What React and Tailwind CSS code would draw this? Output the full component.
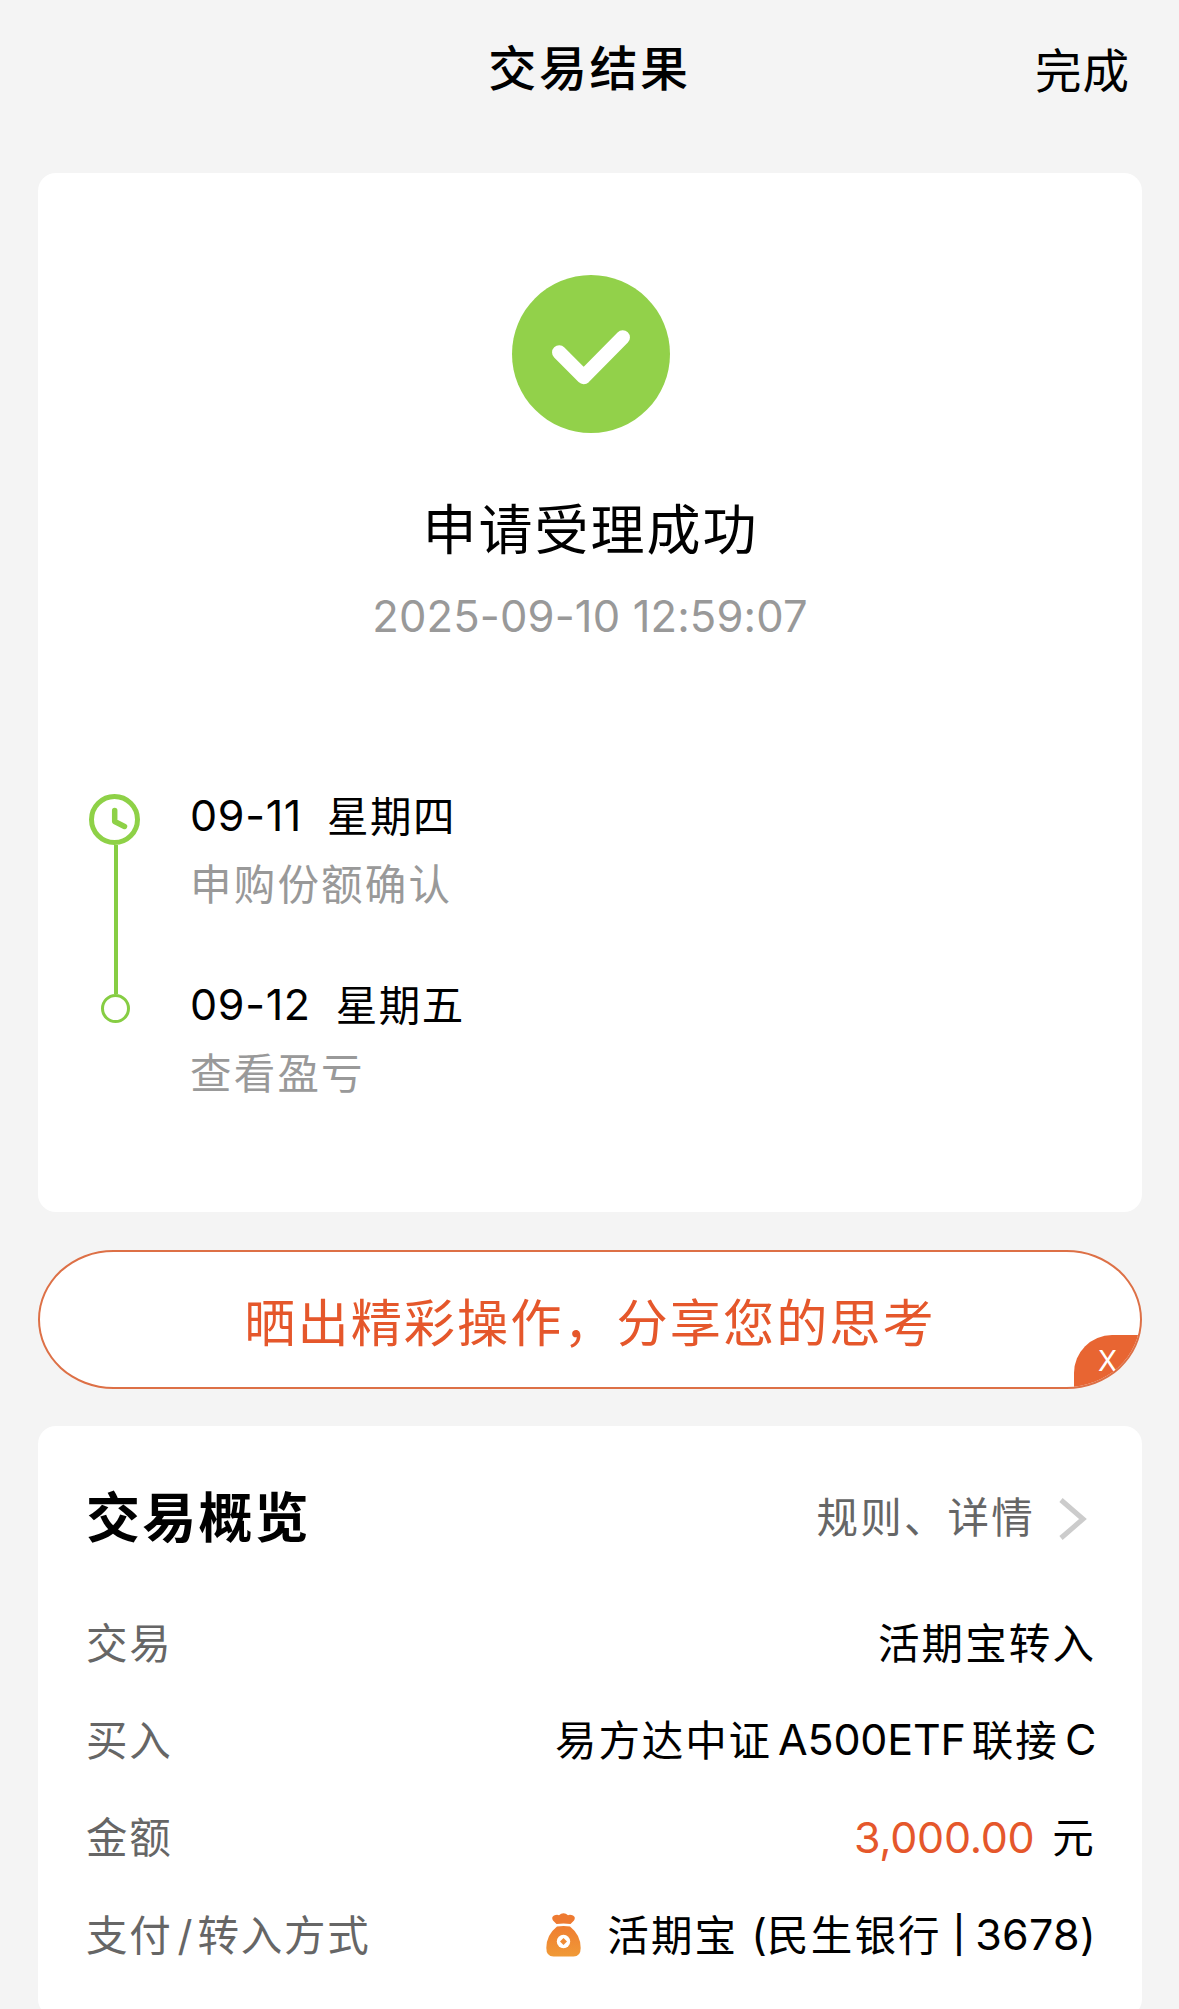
import clsx from 'clsx'

// 处理进度
const STEPS = [
  { date: '09-11', week: '星期四', desc: '申购份额确认' },
  { date: '09-12', week: '星期五', desc: '查看盈亏' },
]

function SuccessIcon() {
  return (
    <svg className="ml-[2px] block size-[158px]" viewBox="0 0 158 158" fill="none">
      <circle cx="79" cy="79" r="79" fill="#92d14a" />
      <path
        d="M47.3 77.5L71.7 102L110.7 62.5"
        stroke="#fff"
        strokeWidth="14.5"
        strokeLinecap="round"
        strokeLinejoin="round"
      />
    </svg>
  )
}

function ClockIcon() {
  return (
    <svg className="block size-[51px] shrink-0" viewBox="0 0 51 51" fill="none" stroke="#8ed147">
      <circle cx="25.5" cy="25.5" r="23" strokeWidth="5" />
      <path d="M25.7 16.5V27.5L35.5 32.5" strokeWidth="5.5" strokeLinecap="round" strokeLinejoin="round" />
    </svg>
  )
}

function MoneyBagIcon() {
  return (
    <svg className="block h-[44px] w-[35px] shrink-0" viewBox="0 0 35 44">
      <defs>
        <linearGradient id="bag" x1="0" y1="0" x2="0" y2="1">
          <stop offset="0" stopColor="#ef7d31" />
          <stop offset="1" stopColor="#f09a37" />
        </linearGradient>
      </defs>
      <path
        d="M10.5 11L7 7.500Q5 4 8 2.500Q11 1 13 2.200Q15 .3 17.500 .3Q20 .3 22 2.200Q24 1 27 2.500Q30 4 28 7.500L24.500 11Q17.500 9.800 10.500 11Z"
        fill="#ee7a31"
      />
      <path
        d="M11 13.500Q17.500 12.500 24 13.500Q34.700 22 34.700 35Q34.700 43.500 27.500 43.500H7.500Q.3 43.500 .3 35Q.3 22 11 13.500Z"
        fill="url(#bag)"
      />
      <circle cx="17.500" cy="28.500" r="6.700" fill="#fff" />
      <path d="M17.500 25L21 28.500L17.500 32L14 28.500Z" fill="#ef8b34" />
    </svg>
  )
}

function Row({ label, className, children }) {
  return (
    <div className="flex h-[97.3px] items-center justify-between pl-[48px] pr-[46px]">
      <span className="pt-[4px] tracking-[1.800px] text-[#666]">{label}</span>
      <span className={clsx('flex items-center text-black', className)}>{children}</span>
    </div>
  )
}

export default function App() {
  return (
    <div className="h-[2009px] w-[1179px] overflow-hidden bg-[#f4f4f4] font-[Inter,'Noto_Sans_CJK_SC',sans-serif] text-[41.5px] leading-none tracking-[2.2px] whitespace-nowrap text-black">
      <header className="grid h-[173px] grid-cols-[1fr_auto_1fr] items-start pt-[38px] pr-[49px]">
        <h1 className="col-start-2 row-start-1 pl-[49px] text-[48px] leading-[62px] font-medium tracking-[2.600px]">交易结果</h1>
        <button className="col-start-3 row-start-1 justify-self-end pt-[2px] text-[46.500px] leading-[62px] tracking-[1px]">完成</button>
      </header>

      <main className="flex flex-col pr-[37px] pl-[38px]">
        <section className="h-[1039px] rounded-[18px] bg-white pt-[102px]">
          <div className="flex flex-col items-center">
            <SuccessIcon />
            <h2 className="mt-[66px] pl-[1px] text-[54px] leading-[64px] tracking-[2px]">申请受理成功</h2>
            <time className="mt-[29px] text-[43.500px] leading-[48px] tracking-[0.150px] text-[#999]">2025-09-10 12:59:07</time>
          </div>

          <div className="mt-[152px] flex pl-[51px]">
            <div className="flex w-[51px] flex-col items-center pt-[2px]">
              <ClockIcon />
              <div className="ml-[2px] h-[149px] w-[4px] bg-[#86cd43]" />
              <div className="ml-[2px] size-[29px] rounded-full border-3 border-[#86cd43]" />
            </div>
            <ul className="ml-[50px]">
              {STEPS.map(step => (
                <li key={step.date} className="h-[189px]">
                  <div className="flex h-[46px] items-center pt-px">
                    <span className="mr-[25px] text-[43px] tracking-[0.700px]">{step.date}</span>
                    <span className="pt-[4px] tracking-[1.500px]">{step.week}</span>
                  </div>
                  <p className="mt-[24px] leading-[46px] text-[#999]">{step.desc}</p>
                </li>
              ))}
            </ul>
          </div>
        </section>

        <section className="relative mt-[38px] flex h-[139px] items-center justify-center overflow-hidden rounded-[76px/70px] border-2 border-[#dd7046] bg-white">
          <span className="pt-[8px] text-[51.200px] tracking-[2px] text-[#e5572b]">晒出精彩操作，分享您的思考</span>
          <button className="absolute right-0 bottom-0 flex h-[52px] w-[66px] items-center rounded-tl-[38px] bg-[#e86532] pl-[24px] text-[28px] tracking-[0px] text-white">
            X
          </button>
        </section>

        <section className="mt-[37px] h-[591px] rounded-[18px] bg-white pt-[48px]">
          <div className="mb-[30px] flex h-[90px] items-center justify-between pl-[48px] pr-[55px]">
            <h3 className="text-[54px] font-bold tracking-[2.200px]">交易概览</h3>
            <span className="flex items-center gap-[24px] text-[#666]">
              规则、详情
              <svg className="block h-[44px] w-[28px]" viewBox="0 0 28 44" fill="none">
                <path d="M2 3L24 22L2 41" stroke="#ccc" strokeWidth="5" />
              </svg>
            </span>
          </div>

          <Row label="交易">
            <span className="pt-[4px] tracking-[2.100px]">活期宝转入</span>
          </Row>
          <Row label="买入">
            <span className="pt-[4px] tracking-[1.900px]">易方达中证</span>
            <span className="ml-[6px] text-[43px] tracking-[-0.200px]">A500ETF</span>
            <span className="ml-[6px] pt-[4px]">联接</span>
            <span className="ml-[6px] text-[43px] tracking-[-0.500px]">C</span>
          </Row>
          <Row label="金额">
            <span className="mr-[18px] text-[43px] tracking-[-0.300px] text-[#e5572b]">3,000.00</span>
            <span className="pt-[4px]">元</span>
          </Row>
          <Row
            label={
              <>
                支付<span className="mr-[3px] ml-[5px]">/</span>转入方式
              </>
            }
          >
            <MoneyBagIcon />
            <span className="ml-[26px] pt-[4px]">活期宝</span>
            <span className="ml-[13px] text-[43px] tracking-[0px]">(</span>
            <span className="pt-[4px]">民生银行</span>
            <span className="mr-[10px] ml-[11px] text-[36px] font-medium tracking-[0px]">|</span>
            <span className="text-[43px] tracking-[0.300px]">3678)</span>
          </Row>
        </section>
      </main>
    </div>
  )
}
